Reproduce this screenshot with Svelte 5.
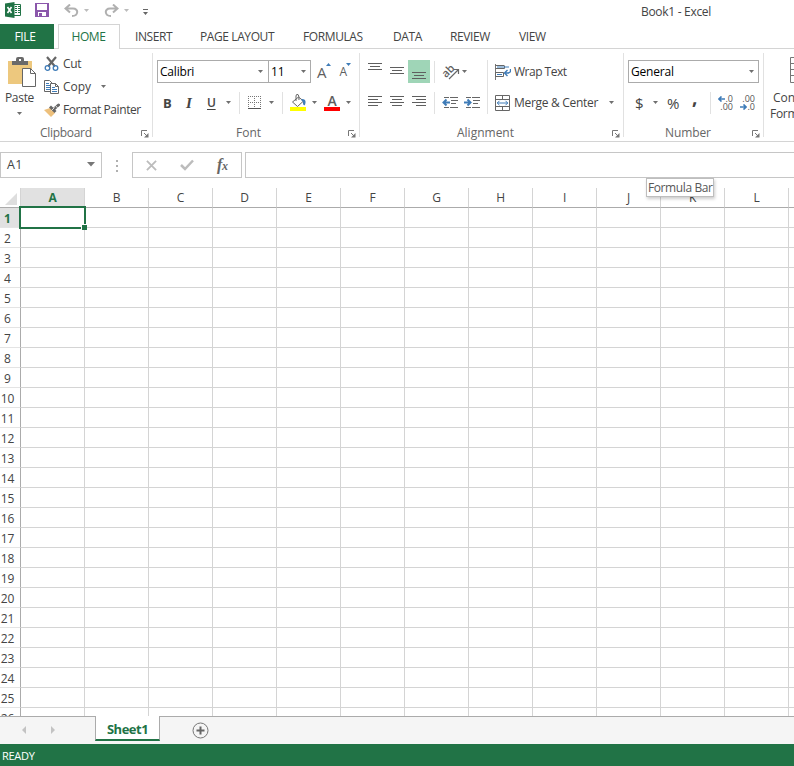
<script lang="ts">
    const tabs = [
        { name: "INSERT", width: 65 },
        { name: "PAGE LAYOUT", width: 103 },
        { name: "FORMULAS", width: 90 },
        { name: "DATA", width: 57 },
        { name: "REVIEW", width: 69 },
        { name: "VIEW", width: 60 },
    ];
    const columns = "ABCDEFGHIJKLM".split("");
    const rows = Array.from({ length: 26 }, (_, i) => i + 1);

    let selected = $state({ col: 0, row: 0 });
    let sheet = $state("Sheet1");
</script>

{#snippet arrow()}
    <svg class="arrow" width="5" height="3" viewBox="0 0 5 3"><path d="M0 0h5L2.5 3z" /></svg>
{/snippet}

{#snippet launcher()}
    <svg class="launcher" width="8" height="8" viewBox="0 0 8 8">
        <path d="M.5 6V.5H6M3 3l3 3" fill="none" stroke="#777" />
        <path d="M7.5 3v4.500H3z" fill="#777" />
    </svg>
{/snippet}

{#snippet lines(bars: number[][])}
    <svg width="14" height="20" viewBox="0 0 14 20">
        {#each bars as [x, y, w]}
            <rect {x} {y} width={w} height="1" fill="#5f5f5f" />
        {/each}
    </svg>
{/snippet}

<div class="app">
    <header class="title-bar">
        <svg class="logo" width="16" height="16" viewBox="0 0 16 16">
            <path d="M9 2.500h6.500v11H9" fill="#fff" stroke="#217346" />
            <path d="M10 4.500h2m1 0h2M10 6.500h2m1 0h2M10 8.500h2m1 0h2M10 10.500h2m1 0h2" stroke="#217346" />
            <path d="M0 1.500L9.500 0v16L0 14.500z" fill="#217346" />
            <path d="M2.500 5l4 6M6.500 5l-4 6" stroke="#fff" stroke-width="1.600" />
        </svg>
        <svg class="save" width="14" height="14" viewBox="0 0 14 14">
            <path d="M0 0h14v14H0z" fill="#8b57ab" />
            <path d="M2 1h10v6H2zM3 9h8v4H3z" fill="#fff" />
            <path d="M4 10h3v3H4z" fill="#8b57ab" />
        </svg>
        <svg class="undo" width="15" height="13" viewBox="0 0 15 13">
            <path d="M1.500 4.500H9c6 0 5.500 7.500-1 7.500M6 .500l-4.500 4L6 8.500" fill="none" stroke="#b0b0b0" stroke-width="2" />
        </svg>
        <span class="pale">{@render arrow()}</span>
        <svg class="redo" width="15" height="13" viewBox="0 0 15 13">
            <path d="M13.500 4.500H6c-6 0-5.500 7.500 1 7.500M9 .500l4.500 4L9 8.500" fill="none" stroke="#b0b0b0" stroke-width="2" />
        </svg>
        <span class="pale">{@render arrow()}</span>
        <svg class="customize" width="5" height="6" viewBox="0 0 5 6">
            <path d="M0 0h5v1H0zM0 3h5L2.500 6z" fill="#666" />
        </svg>
        <span class="title">Book1 - Excel</span>
    </header>

    <nav class="tabs">
        <div class="file">FILE</div>
        <div class="home">HOME</div>
        {#each tabs as tab (tab.name)}
            <div class="tab" style="width: {tab.width}px">{tab.name}</div>
        {/each}
    </nav>

    <section class="ribbon">
        <div class="group clipboard">
            <div class="tools">
                <div class="paste">
                    <svg width="28" height="30" viewBox="0 0 28 30">
                        <path d="M0 4h24v23H0z" fill="#edc87e" />
                        <path d="M4 8V4h4V2q0-2 2-2h4q2 0 2 2v2h4v4z" fill="#6a6a6a" />
                        <path d="M11 2h2v2h-2z" fill="#fff" />
                        <path d="M14.500 11.500h8l5 5v13h-13z" fill="#fff" stroke="#666" />
                        <path d="M22.500 11.500v5h5" fill="none" stroke="#666" />
                    </svg>
                    <span>Paste</span>
                    {@render arrow()}
                </div>
                <div class="edit">
                    <div class="command">
                        <svg width="16" height="16" viewBox="0 0 16 16">
                            <path d="M3 1l8 9.500M12 1L4 10.500" stroke="#666" stroke-width="2.200" />
                            <circle cx="3.500" cy="12" r="2.300" fill="none" stroke="#3f7cb8" stroke-width="1.300" />
                            <circle cx="11.500" cy="12" r="2.300" fill="none" stroke="#3f7cb8" stroke-width="1.300" />
                        </svg>
                        <span class="cut">Cut</span>
                    </div>
                    <div class="command">
                        <svg width="16" height="16" viewBox="0 0 16 16">
                            <path d="M.500 1.500h5l3 3v8h-8z" fill="#fff" stroke="#666" />
                            <path d="M2 4.500h3M2 6.500h4M2 8.500h4M2 10.500h4" stroke="#3f7cb8" />
                            <path d="M6.500 4.500h5l3 3v7h-8z" fill="#fff" stroke="#666" />
                            <path d="M11.500 4.500v3h3" fill="none" stroke="#666" />
                            <path d="M8 8.500h3M8 10.500h5M8 12.500h5" stroke="#3f7cb8" />
                        </svg>
                        <span class="copy">Copy</span>
                        {@render arrow()}
                    </div>
                    <div class="command">
                        <svg width="16" height="16" viewBox="0 0 16 16">
                            <path d="M0 8l6-2 5 5-4 4z" fill="#edc07c" />
                            <path d="M6 4.500l5.500 5.500" stroke="#666" stroke-width="2.800" />
                            <path d="M10 7l4.500-4" stroke="#666" stroke-width="3" stroke-linecap="round" />
                            <path d="M7.500 8.500l3-3M11.500 3.500l2.500 3" stroke="#fff" stroke-width=".8" />
                        </svg>
                        <span class="painter">Format Painter</span>
                    </div>
                </div>
            </div>
            <div class="caption"><span>Clipboard</span>{@render launcher()}</div>
        </div>

        <div class="group font">
            <div class="tools stack">
                <div class="line">
                    <div class="combo family">Calibri{@render arrow()}</div>
                    <div class="combo size"><span class="eleven">11</span>{@render arrow()}</div>
                    <span class="resize grow">A<svg width="5" height="3" viewBox="0 0 5 3"><path d="M0 3h5L2.500 0z" fill="#3f7cb8" /></svg></span>
                    <span class="resize shrink">A<svg width="5" height="3" viewBox="0 0 5 3"><path d="M0 0h5L2.500 3z" fill="#3f7cb8" /></svg></span>
                </div>
                <div class="line second">
                    <b class="bold">B</b>
                    <i class="italic">I</i>
                    <b class="under">U</b>
                    {@render arrow()}
                    <span class="rule"></span>
                    <svg class="borders" width="13" height="14" viewBox="0 0 13 14">
                        <path d="M0 .500h13M0 6.500h13M.500 0v12M6.500 0v12M12.500 0v12" stroke="#777" stroke-dasharray="1 1" />
                        <path d="M0 12.500h13" stroke="#555" />
                    </svg>
                    {@render arrow()}
                    <span class="rule"></span>
                    <svg class="bucket" width="16" height="17" viewBox="0 0 16 17">
                        <path d="M2.500 8l6-5 5 4-6 5.500z" fill="#fff" stroke="#666" />
                        <path d="M6 7V2q0-2 2-1.500Q9 1 9 6" fill="none" stroke="#666" />
                        <path d="M12 5q5 0 3 6-1 1-2-1 .5-3-2-4z" fill="#3f7cb8" />
                        <path d="M0 13h16v4H0z" fill="#ff0" />
                    </svg>
                    {@render arrow()}
                    <span class="color">A</span>
                    {@render arrow()}
                </div>
            </div>
            <div class="caption"><span>Font</span>{@render launcher()}</div>
        </div>

        <div class="group alignment">
            <div class="tools">
                <div class="stack">
                    <div class="line">
                        <span class="align">{@render lines([[0, 2, 14], [2, 5, 10], [0, 8, 14]])}</span>
                        <span class="align">{@render lines([[0, 6, 14], [2, 9, 10], [0, 12, 14]])}</span>
                        <span class="align active">{@render lines([[0, 11, 14], [2, 14, 10], [0, 17, 14]])}</span>
                        <span class="rule"></span>
                        <svg class="orient" width="18" height="16" viewBox="0 0 18 16">
                            <text x="0" y="11" font-size="11" font-weight="600" transform="rotate(-45 6 8)">ab</text>
                            <path d="M7 15l9-9M12 5.500h4.500V10" fill="none" stroke="#666" stroke-width="1.200" />
                        </svg>
                        {@render arrow()}
                    </div>
                    <div class="line second">
                        <span class="align">{@render lines([[0, 4, 14], [0, 7, 10], [0, 10, 14], [0, 13, 10]])}</span>
                        <span class="align">{@render lines([[0, 4, 14], [2, 7, 10], [0, 10, 14], [2, 13, 10]])}</span>
                        <span class="align">{@render lines([[0, 4, 14], [4, 7, 10], [0, 10, 14], [4, 13, 10]])}</span>
                        <span class="rule"></span>
                        <svg class="outdent" width="16" height="12" viewBox="0 0 16 12">
                            <path d="M2 .500h5m1 0h8M9 3.500h7M9 6.500h5M2 10.500h5m1 0h8" stroke="#666" />
                            <path d="M8 5.500H2M4.500 2.500l-3 3 3 3" fill="none" stroke="#3f7cb8" stroke-width="2" />
                        </svg>
                        <svg class="indent" width="16" height="12" viewBox="0 0 16 12">
                            <path d="M2 .500h5m1 0h8M9 3.500h7M9 6.500h5M2 10.500h5m1 0h8" stroke="#666" />
                            <path d="M0 5.500h6M3.500 2.500l3 3-3 3" fill="none" stroke="#3f7cb8" stroke-width="2" />
                        </svg>
                    </div>
                </div>
                <span class="rule tall"></span>
                <div class="stack">
                    <div class="line">
                        <svg class="wide-icon" width="16" height="16" viewBox="0 0 16 16">
                            <path d="M.500 0v16" stroke="#777" />
                            <path d="M.500 1.500h8.500M.500 4.500h9v-3M.500 8.500h8v4h-8z" fill="none" stroke="#666" />
                            <path d="M2 3h12M2 10.500h5" stroke="#3f7cb8" />
                            <path d="M15.500 5v2q0 2-3 2h-2M12.500 6l-3 3 3 3" fill="none" stroke="#3f7cb8" stroke-width="1.400" />
                        </svg>
                        <span class="wrap">Wrap Text</span>
                    </div>
                    <div class="line second">
                        <svg class="wide-icon" width="15" height="16" viewBox="0 0 15 16">
                            <path d="M.500 .500h14v15H.500zM0 4.500h15M0 11.500h15M7.500 0v4M7.500 12v4" fill="none" stroke="#666" />
                            <path d="M2 8h11M4.500 5.800L2.300 8l2.200 2.200M10.500 5.800L12.700 8l-2.200 2.200" fill="none" stroke="#3f7cb8" />
                        </svg>
                        <span class="merge">Merge &amp; Center</span>
                        {@render arrow()}
                    </div>
                </div>
            </div>
            <div class="caption"><span>Alignment</span>{@render launcher()}</div>
        </div>

        <div class="group number">
            <div class="tools stack">
                <div class="line"><div class="combo format">General{@render arrow()}</div></div>
                <div class="line second">
                    <span class="dollar">$</span>
                    {@render arrow()}
                    <span class="percent">%</span>
                    <b class="comma">,</b>
                    <span class="rule"></span>
                    <div class="decimal">
                        <div>
                            <svg width="7" height="6" viewBox="0 0 7 6"><path d="M7 3H1M3.500 .500L1 3l2.500 2.500" fill="none" stroke="#3f7cb8" stroke-width="1.600" /></svg>
                            <span>.0</span>
                        </div>
                        <div>.00</div>
                    </div>
                    <div class="decimal">
                        <div>.00</div>
                        <div>
                            <svg width="7" height="6" viewBox="0 0 7 6"><path d="M0 3h6M3.500 .500L6 3 3.500 5.500" fill="none" stroke="#3f7cb8" stroke-width="1.600" /></svg>
                            <span>.0</span>
                        </div>
                    </div>
                </div>
            </div>
            <div class="caption"><span>Number</span>{@render launcher()}</div>
        </div>

        <div class="styles">
            <svg width="26" height="26" viewBox="0 0 26 26">
                <path d="M.500 .500h25v25H.500zM0 6.500h26M0 12.500h26M0 18.500h26" fill="#fff" stroke="#777" />
            </svg>
            <span class="cond">Conditional</span>
            <span class="formatting">Formatting</span>
        </div>
    </section>

    <section class="formula-row">
        <div class="name-box">
            <span>{columns[selected.col]}{selected.row + 1}</span>
            <svg width="8" height="5" viewBox="0 0 8 5"><path d="M0 0h8L4 4.500z" fill="#777" /></svg>
        </div>
        <svg class="grip" width="2" height="12" viewBox="0 0 2 12"><path d="M0 0h2v2H0zM0 5h2v2H0zM0 10h2v2H0z" fill="#b0b0b0" /></svg>
        <div class="entry">
            <svg width="11" height="11" viewBox="0 0 12 12"><path d="M1 1l10 10M11 1L1 11" stroke="#bcbcbc" stroke-width="2" /></svg>
            <svg width="14" height="12" viewBox="0 0 14 12"><path d="M1 6l4 4 8-8.500" fill="none" stroke="#bcbcbc" stroke-width="2.500" /></svg>
            <span class="fx">f<small>x</small></span>
        </div>
        <div class="formula"></div>
        <div class="tooltip">Formula Bar</div>
    </section>

    <main class="grid">
        <div class="row head">
            <div class="corner">
                <svg width="12" height="12" viewBox="0 0 12 12"><path d="M12 0v12H0z" fill="#dedede" /></svg>
            </div>
            {#each columns as col, i (col)}
                <div class="col-name" class:current={i === selected.col}>{col}</div>
            {/each}
        </div>
        {#each rows as row, r (row)}
            <div class="row">
                <div class="row-name" class:current={r === selected.row}>{row}</div>
                {#each columns as col (col)}
                    <div class="cell"></div>
                {/each}
            </div>
        {/each}
        <div class="cursor"><span></span></div>
    </main>

    <footer class="sheets">
        <svg class="nav" width="34" height="8" viewBox="0 0 34 8"><path d="M4 0v8L0 4zM29 0v8l4-4z" fill="#c3c3c3" /></svg>
        <div class="sheet">{sheet}</div>
        <svg class="add" width="17" height="17" viewBox="0 0 17 17">
            <circle cx="8.500" cy="8.500" r="7.500" fill="none" stroke="#777" />
            <path d="M4.500 8.500h8M8.500 4.500v8" stroke="#666" stroke-width="2" />
        </svg>
    </footer>
    <div class="status">READY</div>
</div>

<style>
    .app {
        width: 794px;
        height: 766px;
        display: flex;
        flex-direction: column;
        overflow: hidden;
        background: #fff;
        color: #444;
        font: 12px/16px "Open Sans", "Noto Sans", sans-serif;
        letter-spacing: -0.3px;
        white-space: nowrap;
    }

    .app * {
        box-sizing: border-box;
    }

    svg {
        display: block;
        flex: none;
    }

    svg text {
        fill: #5f5f5f;
        letter-spacing: 0;
    }

    .arrow {
        fill: #6f6f6f;
    }

    .pale .arrow {
        fill: #bcbcbc;
    }

    .title-bar {
        flex: 0 0 24px;
        display: flex;
        align-items: center;
        padding: 0 0 4px 5px;
    }

    .save {
        margin-left: 14px;
    }

    .undo {
        margin: 0 5px 0 15px;
    }

    .redo {
        margin: 0 5px 0 15px;
    }

    .customize {
        margin: 3px 0 0 14px;
    }

    .title {
        margin: 4px 0 0 493px;
    }

    .tabs {
        flex: 0 0 25px;
        min-height: 0;
        display: flex;
        line-height: 25px;
        letter-spacing: -0.4px;
        border-bottom: 1px solid #d4d4d4;
    }

    .file {
        width: 54px;
        height: 25px;
        text-align: center;
        padding-right: 4px;
        background: #217346;
        color: #fff;
    }

    .home {
        width: 62px;
        height: 25px;
        margin: 0 15px 0 4px;
        padding-right: 1px;
        text-align: center;
        line-height: 24px;
        border: 1px solid #d4d4d4;
        border-bottom: 0;
        background: #fff;
        color: #217346;
    }

    .tab {
        flex: none;
    }

    .ribbon {
        flex: 0 0 93px;
        display: flex;
        border-bottom: 1px solid #d4d4d4;
    }

    .group {
        flex: none;
        height: 84px;
        margin-top: 4px;
        display: flex;
        flex-direction: column;
        border-right: 1px solid #e1e1e1;
    }

    .clipboard {
        width: 153px;
    }

    .font {
        width: 207px;
        padding-left: 4px;
    }

    .alignment {
        width: 264px;
    }

    .number {
        width: 140px;
        padding-left: 4px;
    }

    .tools {
        flex: 0 0 72px;
        display: flex;
    }

    .stack {
        display: flex;
        flex-direction: column;
        padding-top: 7px;
    }

    .line {
        height: 23px;
        display: flex;
        align-items: center;
    }

    .second {
        margin-top: 8px;
    }

    .caption {
        flex: 0 0 16px;
        display: flex;
        align-items: center;
        color: #666;
        letter-spacing: 0;
    }

    .clipboard .caption {
        padding-left: 40px;
        letter-spacing: -0.4px;
        letter-spacing: -0.3px;
    }

    .font .caption {
        padding-left: 79px;
    }

    .alignment .caption {
        padding-left: 97px;
    }

    .number .caption {
        padding-left: 37px;
        letter-spacing: -0.1px;
    }

    .launcher {
        margin: 2px 3px 0 auto;
    }

    .paste {
        width: 39px;
        display: flex;
        flex-direction: column;
        align-items: center;
        padding-top: 4px;
    }

    .paste svg:first-child {
        margin-left: 5px;
    }

    .paste span {
        margin: 3px 0 6px;
    }

    .edit {
        padding-left: 5px;
        margin-top: -1px;
    }

    .command {
        height: 23px;
        display: flex;
        align-items: center;
    }

    .command span {
        margin: 0 9px 0 3px;
    }

    .command .copy {
        margin-right: 10px;
        letter-spacing: 0;
    }

    .command .painter {
        letter-spacing: -0.42px;
    }

    .combo {
        height: 23px;
        display: flex;
        align-items: center;
        justify-content: space-between;
        padding: 0 4px 0 2px;
        border: 1px solid #ababab;
        color: #000;
        letter-spacing: -0.2px;
    }

    .family {
        width: 112px;
        padding-right: 5px;
    }

    .size {
        width: 43px;
        margin-left: -1px;
    }

    .format {
        width: 131px;
        padding-left: 2px;
    }

    .resize {
        display: flex;
        color: #5f5f5f;
        letter-spacing: 0;
    }

    .resize svg {
        margin-top: 1px;
    }

    .grow {
        margin-left: 6px;
        font-size: 15px;
    }

    .shrink {
        margin-left: 9px;
    }

    .grow svg,
    .shrink svg {
        margin-left: -1px;
        margin-top: -1px;
    }

    .bold {
        width: 23px;
        padding-left: 6px;
        font-size: 13px;
    }

    .italic {
        width: 21px;
        padding-left: 6px;
        font-family: "Liberation Serif", serif;
        font-size: 15px;
        font-weight: bold;
    }

    .under {
        width: 10px;
        margin: 0 9px 0 6px;
        font-weight: 600;
        text-decoration: underline;
        text-underline-offset: 2px;
    }

    .rule {
        flex: none;
        width: 1px;
        height: 22px;
        background: #e1e1e1;
    }

    .font .rule {
        margin: 0 7px 0 8px;
    }

    .borders {
        margin-right: 8px;
    }

    .font .borders {
        margin-left: 1px;
    }

    .bucket {
        margin: 0 6px 0 0;
    }

    .color {
        width: 16px;
        height: 17px;
        margin: 0 6px 0 7px;
        border-bottom: 4px solid #f00;
        text-align: center;
        line-height: 14px;
        font-size: 14px;
        font-weight: 600;
        color: #5f5f5f;
    }

    .align {
        width: 22px;
        height: 23px;
        display: flex;
        justify-content: center;
        padding-top: 1px;
    }

    .alignment .line .align:first-child {
        margin-left: 4px;
    }

    .active {
        background: #9fd5b7;
    }

    .alignment .line .rule {
        margin: 0 7px 0 4px;
    }

    .orient {
        margin-right: 2px;
    }

    .indent {
        margin: 0 7px 0 6px;
    }

    .tall {
        height: 54px;
        margin-top: 7px;
    }

    .wide-icon {
        margin: 0 3px 0 7px;
    }

    .wrap {
        letter-spacing: -0.5px;
    }

    .merge {
        width: 95px;
        margin-left: 1px;
    }

    .dollar {
        width: 18px;
        margin-left: 7px;
        font-size: 15px;
    }

    .percent {
        width: 25px;
        margin-left: 9px;
        font-size: 15px;
    }

    .comma {
        width: 18px;
        margin-top: -12px;
        font-size: 19px;
    }

    .decimal {
        width: 15px;
        margin-left: 7px;
        font-size: 9px;
        line-height: 9px;
        letter-spacing: 0;
        text-align: right;
        color: #555;
    }

    .decimal div {
        display: flex;
        align-items: center;
        justify-content: flex-end;
        height: 8px;
    }

    .styles {
        width: 30px;
        display: flex;
        flex-direction: column;
        padding: 8px 0 0 6px;
        overflow: hidden;
    }

    .styles svg {
        margin-left: 20px;
    }

    .cond {
        margin: 7px 0 0 3px;
        letter-spacing: 0;
    }

    .formula-row {
        flex: 0 0 46px;
        display: flex;
        padding-top: 10px;
        position: relative;
    }

    .name-box,
    .entry,
    .formula {
        height: 26px;
        border: 1px solid #c6c6c6;
    }

    .name-box {
        width: 102px;
        display: flex;
        align-items: center;
        justify-content: space-between;
        padding: 0 6px;
        font-size: 12.500px;
        letter-spacing: 0.3px;
    }

    .name-box svg {
        margin-top: -2px;
    }

    .grip {
        margin: 8px 15px 0 14px;
    }

    .entry {
        width: 110px;
        display: flex;
        align-items: center;
        padding-left: 13px;
        margin-left: -1px;
    }

    .entry svg + svg {
        margin: 0 23px 0 23px;
    }

    .fx {
        font: italic bold 16px "Liberation Serif", serif;
        color: #666;
    }

    .fx small {
        font-size: 12px;
    }

    .formula {
        flex: 1;
        margin-left: 3px;
        border-right: 0;
    }

    .tooltip {
        position: absolute;
        left: 646px;
        top: 36px;
        width: 68px;
        height: 19px;
        z-index: 1;
        padding-left: 1px;
        line-height: 17px;
        border: 1px solid #bebebe;
        background: #fff;
        color: #575757;
        letter-spacing: -0.4px;
        box-shadow: 1px 2px 3px rgba(0, 0, 0, 0.2);
    }

    .grid {
        flex: 0 0 528px;
        position: relative;
        overflow: hidden;
    }

    .row {
        display: flex;
        height: 20px;
    }

    .corner,
    .row-name {
        flex: 0 0 21px;
        border-right: 1px solid #ababab;
    }

    .corner {
        padding: 5px 0 0 5px;
        border-bottom: 1px solid #ababab;
        border-right-color: #d4d4d4;
    }

    .row-name {
        padding-right: 5px;
        text-align: center;
        line-height: 22px;
        border-bottom: 1px solid #e4e4e4;
        letter-spacing: 0;
    }

    .col-name,
    .cell {
        flex: 0 0 64px;
        border-right: 1px solid #d4d4d4;
        border-bottom: 1px solid #d4d4d4;
    }

    .col-name {
        text-align: center;
        line-height: 20px;
        border-bottom-color: #ababab;
    }

    .current {
        background: #e1e1e1;
        color: #217346;
        font-weight: bold;
    }

    .cursor {
        position: absolute;
        left: 19px;
        top: 18px;
        width: 67px;
        height: 23px;
        border: 2px solid #217346;
    }

    .cursor span {
        position: absolute;
        right: -3px;
        bottom: -3px;
        width: 6px;
        height: 6px;
        border: solid #fff;
        border-width: 1px 0 0 1px;
        background: #217346;
    }

    .sheets {
        flex: 0 0 28px;
        display: flex;
        background: #f5f5f5;
        border-top: 1px solid #ababab;
    }

    .nav {
        margin: 9px 39px 0 22px;
    }

    .sheet {
        width: 65px;
        height: 25px;
        margin-top: -1px;
        text-align: center;
        line-height: 26px;
        font-size: 13px;
        font-weight: bold;
        letter-spacing: -0.5px;
        color: #217346;
        background: #fff;
        border: solid #ababab;
        border-width: 0 1px;
        border-bottom: 2px solid #217346;
    }

    .add {
        margin: 5px 0 0 32px;
    }

    .status {
        flex: 0 0 22px;
        padding-left: 2px;
        line-height: 23px;
        font-size: 11px;
        background: #217346;
        color: #fff;
    }
</style>
